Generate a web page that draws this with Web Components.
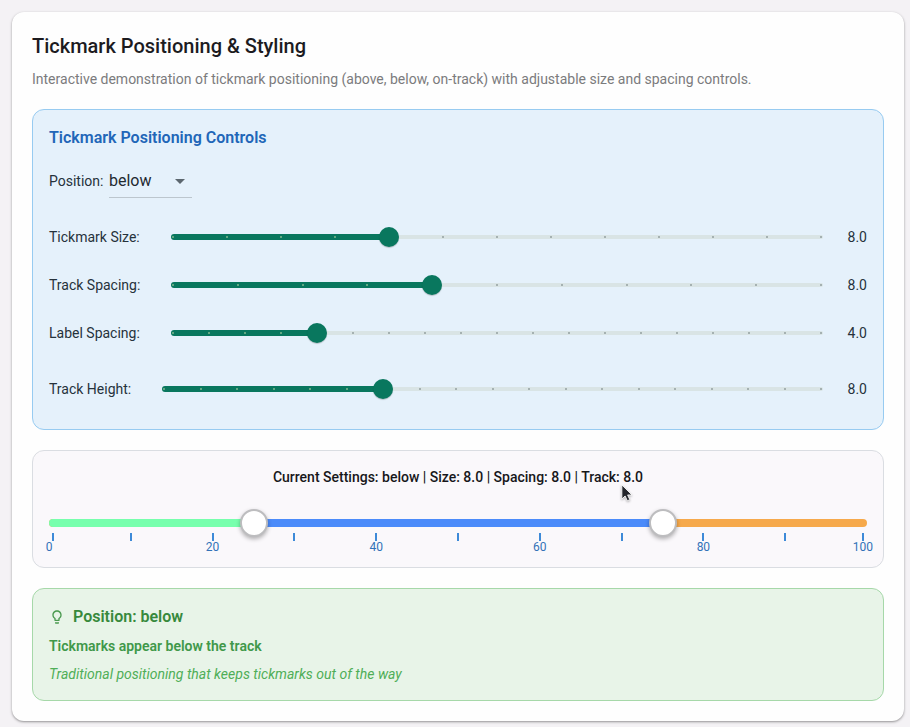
<!DOCTYPE html>
<html lang="en">
<head>
<meta charset="utf-8">
<meta name="viewport" content="width=device-width, initial-scale=1">
<title>Tickmark Positioning &amp; Styling</title>
<style>
  body {
    margin: 0;
    padding: 12px 6px 6px 12px;
    background: #f4f2f5;
    color: #1c1b1f;
    font: 14px/20px Roboto, "Liberation Sans", sans-serif;
  }
</style>
</head>
<body>
<demo-card>
  <span slot="title">Tickmark Positioning &amp; Styling</span>
  <span slot="description">Interactive demonstration of tickmark positioning (above, below, on-track) with adjustable size and spacing controls.</span>

  <tone-panel tone="blue">
    <control-group heading="Tickmark Positioning Controls">
      <position-select></position-select>
      <div>
        <step-slider label="Tickmark Size:" min="4" max="16" step="1" value="8"></step-slider>
        <step-slider label="Track Spacing:" min="0" max="20" step="2" value="8"></step-slider>
        <step-slider label="Label Spacing:" min="0" max="18" step="1" value="4"></step-slider>
      </div>
      <step-slider compact label="Track Height:" min="2" max="20" step="1" value="8"></step-slider>
    </control-group>
  </tone-panel>

  <tone-panel tone="neutral">
    <range-preview low="25" high="75">Current Settings: below | Size: 8.0 | Spacing: 8.0 | Track: 8.0</range-preview>
  </tone-panel>

  <tone-panel tone="green">
    <position-note>
      <span slot="heading">Position: below</span>
      <span slot="summary">Tickmarks appear below the track</span>
      <span slot="detail">Traditional positioning that keeps tickmarks out of the way</span>
    </position-note>
  </tone-panel>
</demo-card>

<script>
class BaseElement extends HTMLElement {
  render(html) {
    const t = document.createElement('template');
    t.innerHTML = html;
    this.attachShadow({ mode: 'open' }).append(t.content.cloneNode(true));
  }
}

customElements.define('demo-card', class extends BaseElement {
  connectedCallback() {
    this.render(`
      <style>
        :host { display: block; padding: 20px; background: #fefefe; border-radius: 12px;
          box-shadow: 0 1px 2px rgba(0,0,0,.3), 0 1px 3px 1px rgba(0,0,0,.08); }
        h1 { margin: 0; font-size: 20px; line-height: 28px; font-weight: 500; }
        p { margin: 9px 0 20px; line-height: 20px; color: #7b7b7d; }
        .stack { display: grid; gap: 20px; }
      </style>
      <h1><slot name="title"></slot></h1>
      <p><slot name="description"></slot></p>
      <div class="stack"><slot></slot></div>`);
  }
});

customElements.define('tone-panel', class extends BaseElement {
  connectedCallback() {
    this.render(`
      <style>
        :host { display: block; padding: 16px; border: 1px solid #dadde2; border-radius: 12px; background: #faf8fb; }
        :host([tone="blue"]) { background: #e5f1fb; border-color: #97cbf1; }
        :host([tone="green"]) { background: #e8f4e8; border-color: #a6d8a9; }
      </style>
      <slot></slot>`);
  }
});

customElements.define('control-group', class extends BaseElement {
  connectedCallback() {
    this.render(`
      <style>
        :host { display: grid; gap: 8px; }
        h2 { margin: 0; font-size: 16px; line-height: 23px; font-weight: 600; color: #2166b8; }
      </style>
      <h2>${this.getAttribute('heading')}</h2>
      <slot></slot>`);
  }
});

customElements.define('position-select', class extends BaseElement {
  connectedCallback() {
    this.render(`
      <style>
        :host { display: flex; align-items: center; height: 48px; color: #26323b; }
        label { min-width: 60px; }
        .field { display: grid; align-items: center; width: 83px; height: 33px; border-bottom: 1px solid #bcc6ce; }
        select, svg { grid-area: 1 / 1; }
        select { appearance: none; width: 100%; height: 100%; margin: 0; padding: 0; border: 0; background: none;
          font: inherit; font-size: 16px; color: #1f2a31; outline-offset: 2px; }
        svg { justify-self: end; pointer-events: none; }
      </style>
      <label for="position">Position:</label>
      <div class="field">
        <select id="position"><option>above</option><option selected>below</option><option>on-track</option></select>
        <svg width="24" height="24" viewBox="0 0 24 24" aria-hidden="true"><path d="M7 10l5 5 5-5z" fill="#5c676f"/></svg>
      </div>`);
  }
});

customElements.define('step-slider', class extends BaseElement {
  connectedCallback() {
    const num = n => Number(this.getAttribute(n));
    const min = num('min'), max = num('max'), step = num('step'), value = num('value');
    const count = (max - min) / step;
    const fill = v => (v - min) / (max - min);
    this.render(`
      <style>
        :host { display: grid; grid-template-columns: 100px 1fr 22px; align-items: center; height: 48px; color: #26323b; }
        :host([compact]) { grid-template-columns: 91px 1fr 22px; }
        output { text-align: right; white-space: nowrap; }
        .slider { display: grid; align-items: center; padding: 0 14px; }
        .slider > * { grid-area: 1 / 1; }
        .rail { height: 4px; margin: 0 8px; border-radius: 2px; background: #d9e4e5; }
        .active { height: 6px; margin: 0 8px; }
        .bar { height: 6px; border-radius: 3px; background: #09775e; }
        .dots { display: flex; justify-content: space-between; margin: 0 9px; }
        .dots i { width: 2px; height: 2px; border-radius: 1px; background: #93a09f; }
        .dots i.on { background: #80b98f; }
        input { appearance: none; width: 100%; height: 20px; margin: 0; background: none; }
        input::-webkit-slider-thumb { appearance: none; width: 20px; height: 20px; border-radius: 50%;
          background: #09775e; box-shadow: 0 1px 1px rgba(0,0,0,.2); }
      </style>
      <label for="range">${this.getAttribute('label')}</label>
      <div class="slider">
        <div class="rail"></div>
        <div class="active"><div class="bar"></div></div>
        <div class="dots">${'<i></i>'.repeat(count + 1)}</div>
        <input id="range" type="range" min="${min}" max="${max}" step="${step}" value="${value}">
      </div>
      <output for="range"></output>`);
    const root = this.shadowRoot, input = root.querySelector('input');
    const update = () => {
      const f = fill(input.valueAsNumber);
      root.querySelector('.bar').style.width = f * 100 + '%';
      root.querySelectorAll('.dots i').forEach((d, i) => d.classList.toggle('on', i / count <= f));
      root.querySelector('output').textContent = input.valueAsNumber.toFixed(1);
    };
    input.addEventListener('input', update);
    update();
  }
});

customElements.define('range-preview', class extends BaseElement {
  connectedCallback() {
    const low = this.getAttribute('low'), high = this.getAttribute('high');
    const ticks = Array.from({ length: 11 }, (_, i) =>
      `<div class="tick"><i></i>${i % 2 ? '' : `<span>${i * 10}</span>`}</div>`).join('');
    this.render(`
      <style>
        :host { display: block; position: relative; }
        p { margin: 0 0 26px; text-align: center; font-weight: 500; color: #17171a; }
        .range { display: grid; grid-template-rows: 20px; align-items: center; }
        .range > * { grid-area: 1 / 1; }
        .track { display: flex; height: 8px; border-radius: 4px; overflow: hidden; background: #f6a94b; }
        .low { background: #77ffad; }
        .mid { background: #4b8bfa; }
        input { appearance: none; height: 28px; margin: 0 -14px; background: none; pointer-events: none; }
        input::-webkit-slider-thumb { appearance: none; box-sizing: border-box; width: 28px; height: 28px;
          border: 2px solid #bdbdbf; border-radius: 50%; background: #fff; pointer-events: auto;
          box-shadow: 0 2px 4px rgba(0,0,0,.3); }
        .ticks { display: flex; justify-content: space-between; height: 18px; }
        .tick { display: flex; flex-direction: column; align-items: center; width: 0; }
        .tick i { flex: none; width: 2px; height: 8px; background: #3d8ad8; }
        .tick:first-child i { margin-left: 8px; }
        .tick:last-child > * { margin-right: 8px; }
        .tick span { font-size: 12px; line-height: 12px; color: #3272b8; }
        .pointer { position: absolute; left: calc(50% + 163px); top: 17px; pointer-events: none;
          filter: drop-shadow(0 1px 1px rgba(0,0,0,.3)); }
      </style>
      <p><slot></slot></p>
      <div class="range">
        <div class="track"><div class="low"></div><div class="mid"></div></div>
        <input class="a" type="range" min="0" max="100" value="${low}" aria-label="Range start">
        <input class="b" type="range" min="0" max="100" value="${high}" aria-label="Range end">
      </div>
      <div class="ticks">${ticks}</div>
      <svg class="pointer" width="12" height="19" viewBox="0 0 14 22" aria-hidden="true">
        <path d="M1 1v16.5l3.8-3.6 2.6 5.6 2.9-1.3-2.6-5.5h5.1z" fill="#24262b" stroke="#fff" stroke-width="1"/>
      </svg>`);
    const root = this.shadowRoot, a = root.querySelector('.a'), b = root.querySelector('.b');
    const update = () => {
      if (a.valueAsNumber > b.valueAsNumber) a.value = b.value;
      root.querySelector('.low').style.width = a.value + '%';
      root.querySelector('.mid').style.width = b.value - a.value + '%';
    };
    a.addEventListener('input', update);
    b.addEventListener('input', update);
    update();
  }
});

customElements.define('position-note', class extends BaseElement {
  connectedCallback() {
    this.render(`
      <style>
        :host { display: grid; gap: 8px; }
        h2 { display: flex; align-items: center; gap: 8px; margin: 0; font-size: 16px; line-height: 23px;
          font-weight: 600; color: #37893c; }
        p { margin: 0; }
        .summary { font-weight: 600; color: #40984a; }
        .detail { font-style: italic; color: #4fae57; }
      </style>
      <h2>
        <svg width="16" height="16" viewBox="0 0 24 24" fill="#4b9a50" aria-hidden="true">
          <path d="M9 21c0 .55.45 1 1 1h4c.55 0 1-.45 1-1v-1H9v1zm3-19C8.140 2 5 5.140 5 9c0 2.380 1.190 4.470 3 5.740V17c0 .55.45 1 1 1h6c.55 0 1-.45 1-1v-2.260c1.810-1.270 3-3.360 3-5.740 0-3.860-3.140-7-7-7zm2.850 11.100l-.85.6V16h-4v-2.300l-.85-.6C7.800 12.160 7 10.630 7 9c0-2.760 2.240-5 5-5s5 2.240 5 5c0 1.630-.8 3.160-2.150 4.100z"/>
        </svg>
        <slot name="heading"></slot>
      </h2>
      <p class="summary"><slot name="summary"></slot></p>
      <p class="detail"><slot name="detail"></slot></p>`);
  }
});
</script>
</body>
</html>
